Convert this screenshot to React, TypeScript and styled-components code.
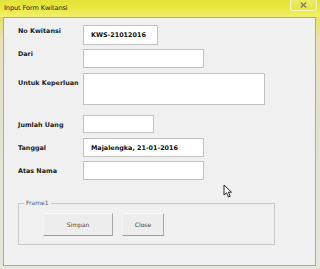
import React from "react";
import styled, { createGlobalStyle } from "styled-components";

const Global = createGlobalStyle`
  html, body { margin: 0; padding: 0; background: #ececec; }
  #root { width: 320px; height: 269px; overflow: hidden; }
`;

const Window = styled.div`
  position: relative;
  width: 320px;
  height: 269px;
  display: flex;
  flex-direction: column;
  background: linear-gradient(180deg, #e9e84c 0px, #e6e55a 17px, #e4e3b8 40px, #e2e2d2 120px, #e6e6e0 269px);
  font-family: "DejaVu Sans", Tahoma, sans-serif;
`;

const TitleBar = styled.div`
  height: 17px;
  display: flex;
  align-items: flex-start;
  justify-content: space-between;
  padding-left: 4px;
  padding-right: 3px;
  background: linear-gradient(180deg, #e3e236 0%, #eae944 55%, #f0ef74 100%);
`;

const Title = styled.span`
  font-size: 6.6px;
  line-height: 17px;
  color: #222;
  letter-spacing: -0.1px;
`;

const CloseBtn = styled.div`
  width: 27px;
  height: 11px;
  box-sizing: border-box;
  border: 1px solid #f6f5b8;
  border-top: none;
  border-radius: 0 0 3px 3px;
  background: linear-gradient(180deg, #ebeb66, #e6e54e);
  display: flex;
  align-items: center;
  justify-content: center;
`;

const Client = styled.div`
  flex: 1;
  margin: 0 4px 3px 3px;
  border: 1px solid #a9a9a9;
  background: #f0f0f0;
  display: flex;
  flex-direction: column;
  padding-left: 14px;
`;

const Row = styled.div<{ $mt: number }>`
  display: flex;
  align-items: flex-start;
  margin-top: ${(p) => p.$mt}px;
`;

const Label = styled.div<{ $off: number }>`
  width: 65px;
  padding-top: ${(p) => p.$off}px;
  font-size: 6.4px;
  line-height: 10px;
  font-weight: bold;
  color: #1c1c1c;
  white-space: nowrap;
`;

const Box = styled.div<{ $w: number; $h: number }>`
  box-sizing: border-box;
  width: ${(p) => p.$w}px;
  height: ${(p) => p.$h}px;
  background: #fff;
  border: 1px solid #c2c2c2;
  padding-left: 7px;
  font-size: 6.4px;
  font-weight: bold;
  color: #111;
  display: flex;
  align-items: center;
  white-space: nowrap;
`;

const Frame = styled.fieldset`
  box-sizing: border-box;
  margin: 19px 0 0 0;
  width: 257px;
  height: 46px;
  padding: 0;
  border: 1px solid #c9c9c9;
`;

const Legend = styled.legend`
  padding: 0 2px;
  margin-left: 5px;
  font-size: 6px;
  line-height: 8px;
  color: #555;
`;

const ButtonRow = styled.div`
  display: flex;
  align-items: flex-start;
  gap: 9px;
  padding: 6px 0 0 24px;
`;

const Button = styled.div<{ $w: number }>`
  box-sizing: border-box;
  width: ${(p) => p.$w}px;
  height: 23px;
  background: #ededed;
  border-top: 1px solid #f8f8f8;
  border-left: 1px solid #f4f4f4;
  border-right: 1px solid #a6a6a6;
  border-bottom: 1px solid #9c9c9c;
  display: flex;
  align-items: center;
  justify-content: center;
  font-size: 6px;
  color: #444;
`;

const Cursor = styled.svg`
  position: absolute;
  left: 223px;
  top: 184px;
`;

const fields = [
  { label: "No Kwitansi", mt: 7, off: 1, w: 75, h: 20, value: "KWS-21012016" },
  { label: "Dari", mt: 4, off: 0, w: 121, h: 19, value: "" },
  { label: "Untuk Keperluan", mt: 5, off: 5, w: 182, h: 32, value: "" },
  { label: "Jumlah Uang", mt: 10, off: 5, w: 71, h: 18, value: "" },
  { label: "Tanggal", mt: 5, off: 5, w: 121, h: 19, value: "Majalengka, 21-01-2016" },
  { label: "Atas Nama", mt: 4, off: 5, w: 121, h: 19, value: "" },
];

export default function App() {
  return (
    <>
      <Global />
      <Window>
        <TitleBar>
          <Title>Input Form Kwitansi</Title>
          <CloseBtn>
            <svg width="7" height="6" viewBox="0 0 7 6">
              <path d="M0.8 0.6 L6.2 5.4 M6.2 0.6 L0.8 5.4" stroke="#7c7c62" strokeWidth="1.3" />
            </svg>
          </CloseBtn>
        </TitleBar>
        <Client>
          {fields.map((f) => (
            <Row key={f.label} $mt={f.mt}>
              <Label $off={f.off}>{f.label}</Label>
              <Box $w={f.w} $h={f.h}>{f.value}</Box>
            </Row>
          ))}
          <Frame>
            <Legend>Frame1</Legend>
            <ButtonRow>
              <Button $w={70}>Simpan</Button>
              <Button $w={42}>Close</Button>
            </ButtonRow>
          </Frame>
        </Client>
        <Cursor width="11" height="14" viewBox="0 0 11 14">
          <path d="M1 1 L1 11 L3.5 8.8 L5.5 13 L7.2 12.2 L5.3 8.2 L8.5 8.2 Z" fill="#fff" stroke="#222" strokeWidth="1" strokeLinejoin="round" />
        </Cursor>
      </Window>
    </>
  );
}
